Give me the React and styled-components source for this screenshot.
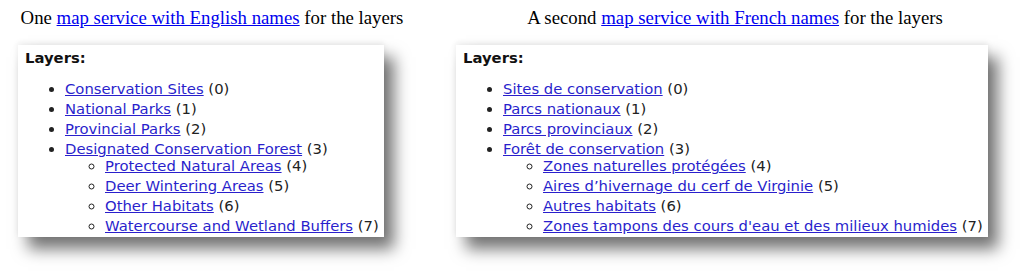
import { createGlobalStyle, styled } from "styled-components";

const services = [
  {
    lead: "One",
    link: "map service with English names",
    layers: [
      { name: "Conservation Sites", id: 0 },
      { name: "National Parks", id: 1 },
      { name: "Provincial Parks", id: 2 },
      {
        name: "Designated Conservation Forest",
        id: 3,
        children: [
          { name: "Protected Natural Areas", id: 4 },
          { name: "Deer Wintering Areas", id: 5 },
          { name: "Other Habitats", id: 6 },
          { name: "Watercourse and Wetland Buffers", id: 7 },
        ],
      },
    ],
  },
  {
    lead: "A second",
    link: "map service with French names",
    layers: [
      { name: "Sites de conservation", id: 0 },
      { name: "Parcs nationaux", id: 1 },
      { name: "Parcs provinciaux", id: 2 },
      {
        name: "Forêt de conservation",
        id: 3,
        children: [
          { name: "Zones naturelles protégées", id: 4 },
          { name: "Aires d’hivernage du cerf de Virginie", id: 5 },
          { name: "Autres habitats", id: 6 },
          { name: "Zones tampons des cours d'eau et des milieux humides", id: 7 },
        ],
      },
    ],
  },
];

function LayerList({ layers, nested }) {
  return (
    <List $nested={nested}>
      {layers.map(layer => (
        <Item key={layer.id}>
          <LayerLink href="#">{layer.name}</LayerLink> ({layer.id})
          {layer.children && <LayerList layers={layer.children} nested />}
        </Item>
      ))}
    </List>
  );
}

function App() {
  return (
    <>
      <GlobalStyle />
      <Page>
        {services.map((service, i) => (
          <Column key={service.link} $second={i === 1}>
            <Caption>
              {service.lead} <CaptionLink href="#">{service.link}</CaptionLink>{" "}
              for the layers
            </Caption>
            <Panel $second={i === 1}>
              <Title>Layers:</Title>
              <LayerList layers={service.layers} />
            </Panel>
          </Column>
        ))}
      </Page>
    </>
  );
}

const GlobalStyle = createGlobalStyle`
  body {
    margin: 0;
    background: #fff;
    font-family: "Liberation Serif", serif;
  }
`;
const Page = styled.div`
  display: flex;
  height: 279px;
`;
const Column = styled.div`
  width: ${p => (p.$second ? "578px" : "424px")};
  margin-left: ${p => (p.$second ? "22px" : "0")};
  padding-top: 7px;
`;
const Caption = styled.p`
  margin: 0 0 17px;
  text-align: center;
  font-size: 18.8px;
  line-height: 21px;
  color: #000;
`;
const CaptionLink = styled.a`
  color: #0000ee;
`;
const Panel = styled.div`
  display: inline-block;
  margin-left: ${p => (p.$second ? "10px" : "18px")};
  background: #fff;
  padding: 4px 5px 0 7px;
  font-family: "DejaVu Sans", Verdana, sans-serif;
  font-size: 14.8px;
  color: #222;
  box-shadow: 10px 12px 15px rgba(0, 0, 0, 0.55), 0 -2px 6px rgba(0, 0, 0, 0.08);
`;
const Title = styled.div`
  font-weight: bold;
  line-height: 17px;
  color: #111;
`;
const List = styled.ul`
  margin: ${p => (p.$nested ? "0" : "14px 0 0")};
  padding-left: 40px;
  list-style: ${p => (p.$nested ? "circle" : "disc")};
`;
const Item = styled.li`
  line-height: 17px;
  margin-bottom: 3px;
  white-space: nowrap;
`;
const LayerLink = styled.a`
  color: #2a1fcc;
`;

export default App;
